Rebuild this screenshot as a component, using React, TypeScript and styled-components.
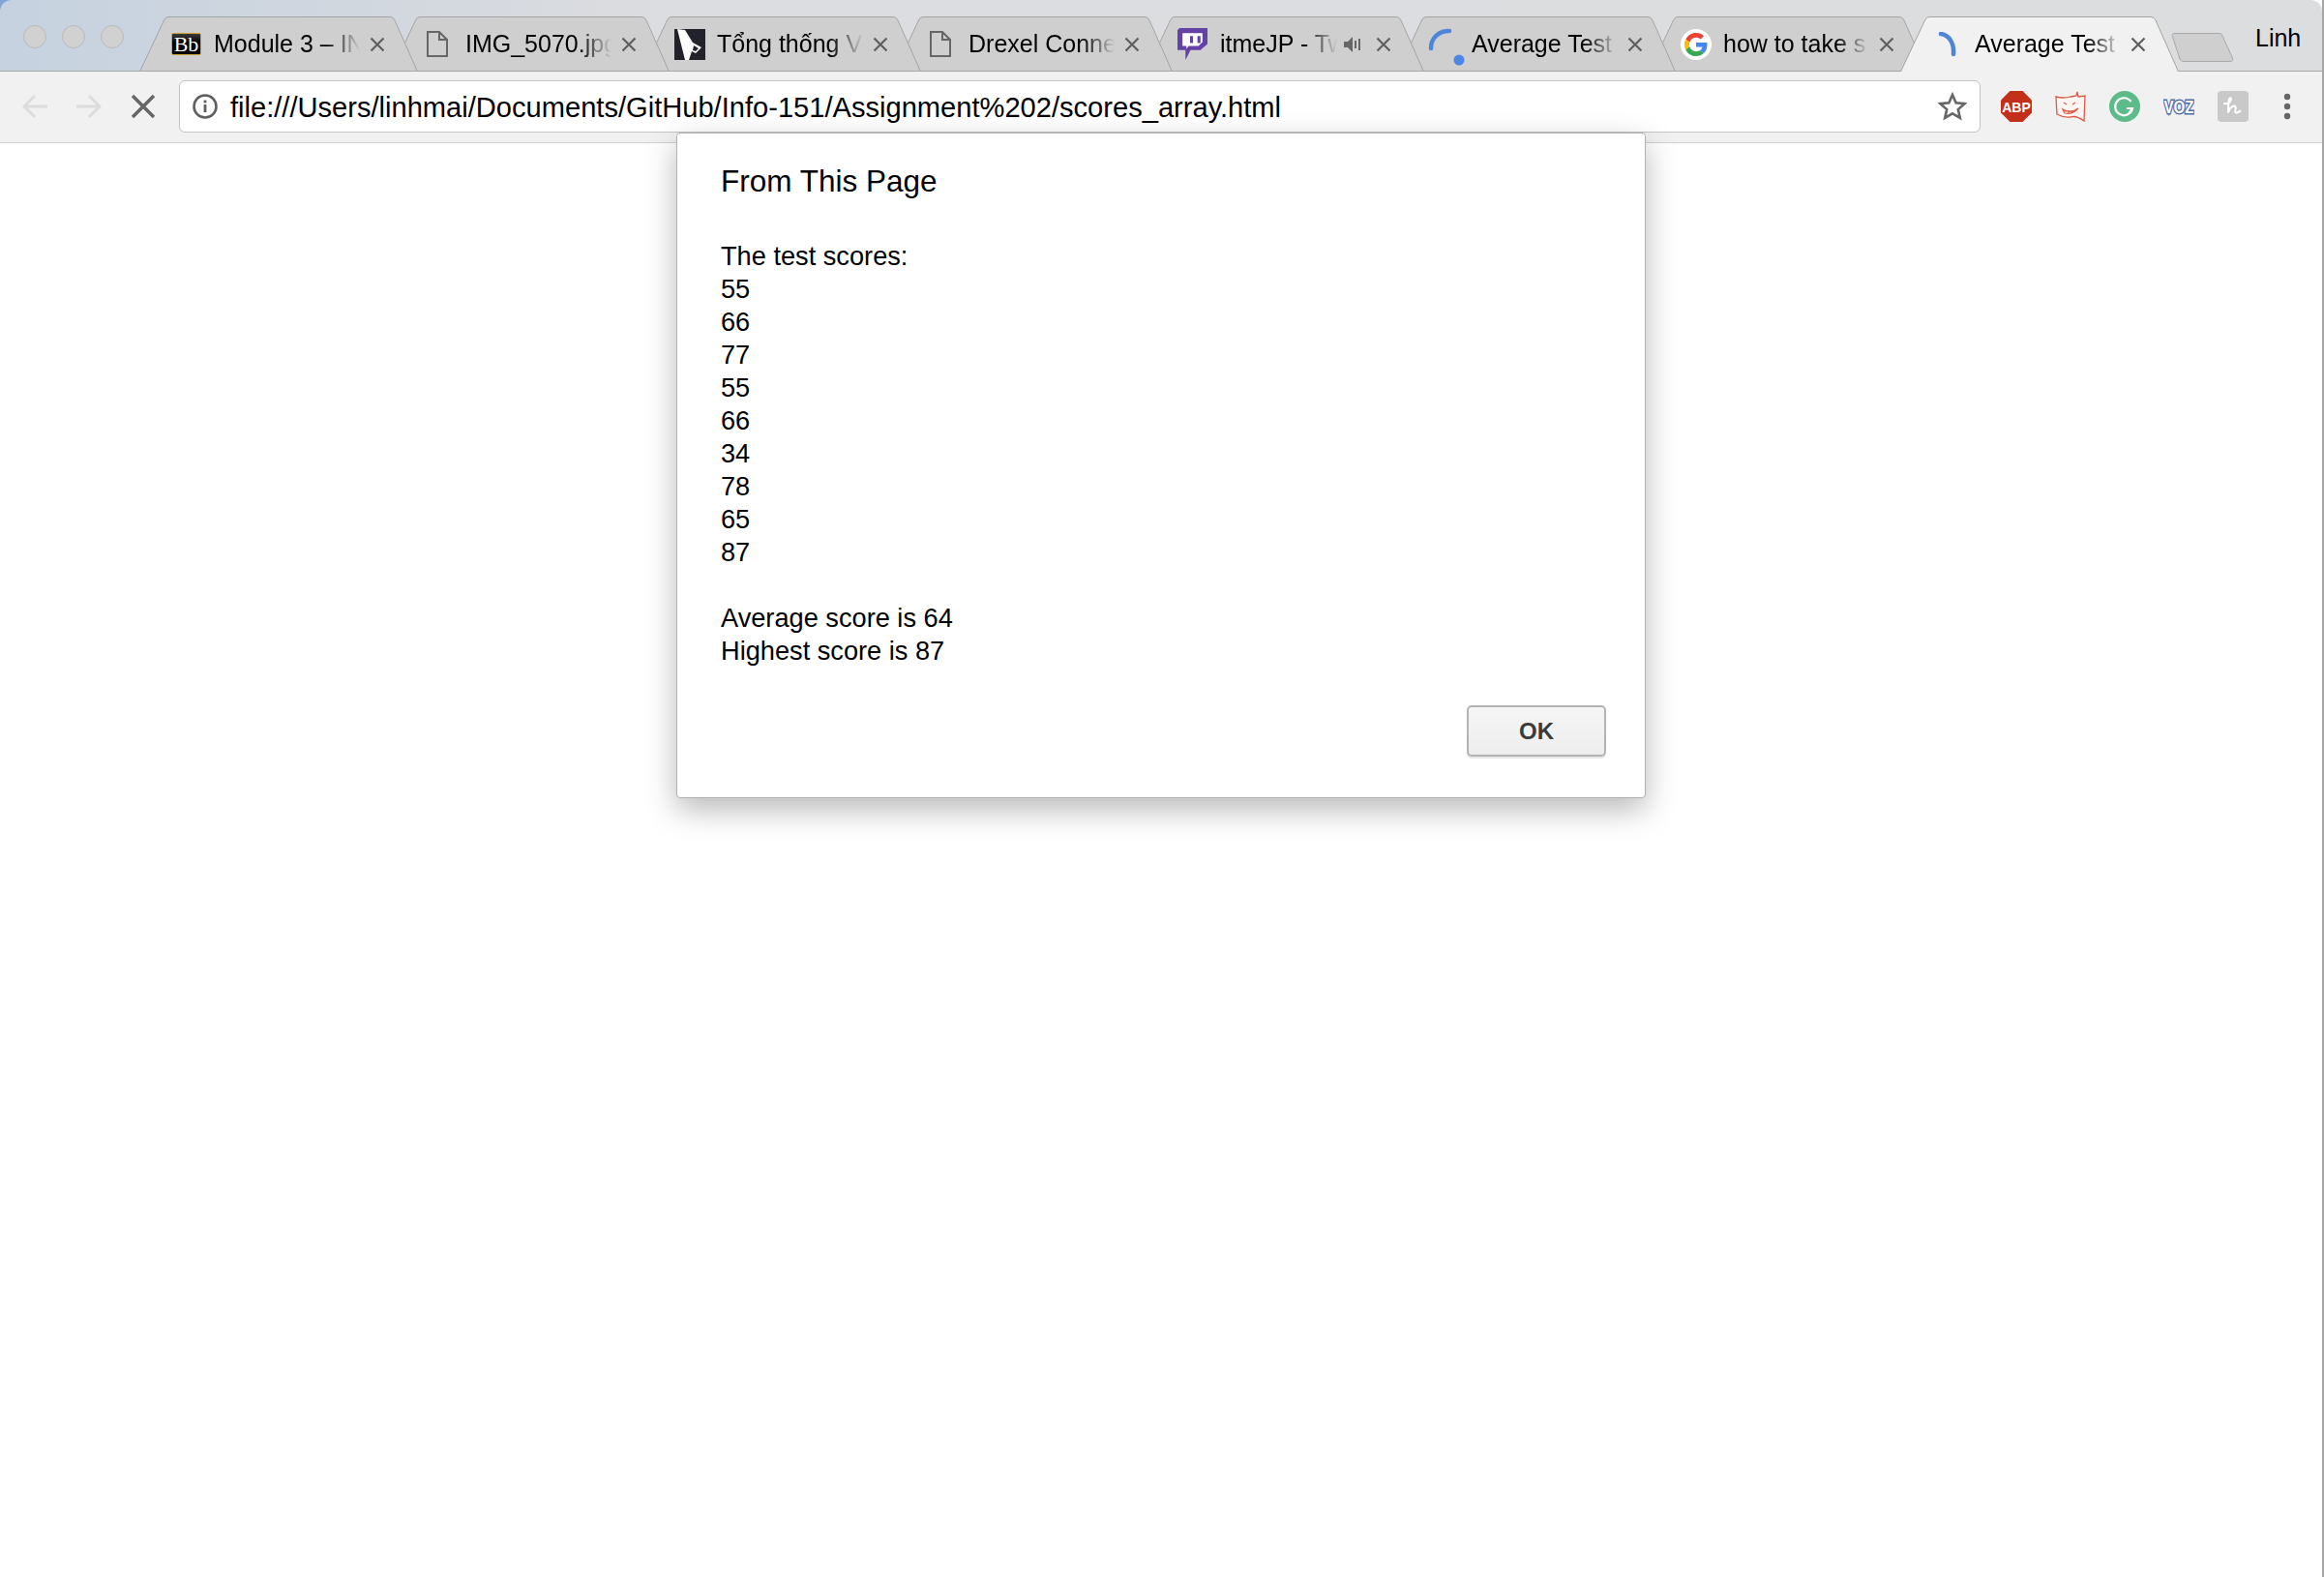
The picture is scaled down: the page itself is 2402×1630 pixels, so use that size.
import React from "react";
import styled, { createGlobalStyle } from "styled-components";

const GlobalStyle = createGlobalStyle`
  html, body {
    margin: 0;
    padding: 0;
    background: #ffffff;
  }
  body {
    font-family: "Liberation Sans", Arial, sans-serif;
  }
`;

const Page = styled.div`
  position: relative;
  box-sizing: border-box;
  width: 2402px;
  height: 1630px;
  overflow: hidden;
  border-right: 2px solid #a6a6a6;
  background: linear-gradient(90deg, #7fa6d4 0, #7fa6d4 20px, #ffffff 20px);
`;

const Content = styled.div`
  height: 100%;
  background: linear-gradient(180deg, transparent 0, transparent 20px, #ffffff 20px);
`;

const TabStrip = styled.div`
  position: relative;
  display: flex;
  align-items: flex-end;
  height: 74px;
  padding-left: 24px;
  border-radius: 12px 12px 0 0;
  background: linear-gradient(90deg, #c6d2e0 0, #cfd6df 300px, #dcdde0 700px, #dcdddf 100%);
  box-shadow: inset 0 -1px 0 #a6a6a6;
`;

const Lights = styled.div`
  display: flex;
  gap: 16px;
  align-self: flex-start;
  margin-top: 26px;
  margin-right: 16px;
`;

const Light = styled.span`
  width: 24px;
  height: 24px;
  box-sizing: border-box;
  border-radius: 50%;
  border: 1px solid #b9b9b9;
  background: #d1d1d1;
`;

const TabItem = styled.div<{ $active?: boolean; $order: number }>`
  position: relative;
  z-index: ${(p) => (p.$active ? 20 : 10 - p.$order)};
  display: flex;
  align-items: center;
  flex: none;
  box-sizing: border-box;
  width: 288px;
  height: 57px;
  padding: 0 32px 0 33px;
  margin-left: ${(p) => (p.$order === 0 ? 0 : -28)}px;
  color: #000000;
`;

const TabShape = styled.svg`
  position: absolute;
  left: 0;
  top: 0;
  width: 288px;
  height: 57px;
`;

const Favicon = styled.span<{ $inset?: number }>`
  position: relative;
  display: flex;
  align-items: center;
  flex: none;
  width: 44px;
  padding-left: ${(p) => p.$inset ?? 0}px;
  box-sizing: border-box;
`;

const BbLogo = styled.span`
  display: flex;
  align-items: center;
  justify-content: center;
  box-sizing: border-box;
  width: 31px;
  height: 23px;
  border: 1px solid #c8a030;
  border-radius: 2px;
  background: linear-gradient(180deg, #3a3a3a 0, #000000 45%);
  color: #ffffff;
  font-family: "Liberation Serif", "Times New Roman", serif;
  font-size: 22px;
  line-height: 1;
`;

const TabTitle = styled.span`
  position: relative;
  flex: 1;
  min-width: 0;
  overflow: hidden;
  white-space: nowrap;
  font-size: 25px;
  line-height: 34px;
  margin-top: -1px;
  -webkit-mask-image: linear-gradient(90deg, #000 calc(100% - 34px), transparent 100%);
  mask-image: linear-gradient(90deg, #000 calc(100% - 34px), transparent 100%);
`;

const Speaker = styled.svg`
  position: relative;
  flex: none;
  width: 18px;
  height: 18px;
  margin: 0 5px 0 7px;
`;

const CloseIcon = styled.svg`
  position: relative;
  flex: none;
  width: 20px;
  height: 20px;
  margin-left: 8px;
`;

const NewTab = styled.svg`
  position: relative;
  z-index: 1;
  flex: none;
  width: 65px;
  height: 30px;
  margin: 0 0 10px -8px;
`;

const ProfileName = styled.span`
  align-self: flex-start;
  margin: 22px 0 0 22px;
  font-size: 25px;
  line-height: 34px;
  color: #000000;
`;

const Toolbar = styled.div`
  display: flex;
  align-items: center;
  box-sizing: border-box;
  height: 74px;
  padding: 0 0 1px 23px;
  background: #f1f1f1;
  border-bottom: 1px solid #d0d0d0;
`;

const NavIcon = styled.svg<{ $gap: number; $w?: number }>`
  flex: none;
  width: ${(p) => p.$w ?? 26}px;
  height: 26px;
  margin-right: ${(p) => p.$gap}px;
`;

const Omnibox = styled.div`
  display: flex;
  align-items: center;
  flex: none;
  box-sizing: border-box;
  width: 1862px;
  height: 54px;
  padding: 0 13px 0 13px;
  border: 1px solid #c4c4c4;
  border-radius: 6px;
  background: #ffffff;
`;

const Url = styled.span`
  flex: 1;
  margin-left: 13px;
  padding-top: 2px;
  font-size: 29.1px;
  line-height: 36px;
  color: #000000;
  white-space: nowrap;
`;

const Extensions = styled.div`
  display: flex;
  align-items: center;
  gap: 24px;
  margin-left: 21px;
`;

const ExtIcon = styled.svg`
  flex: none;
  width: 32px;
  height: 32px;
`;

const VozLabel = styled.text`
  paint-order: stroke;
  font-family: "Liberation Sans", Arial, sans-serif;
  font-weight: 700;
`;

const SpinnerSvg = styled.svg`
  overflow: visible;
`;

const Dialog = styled.div`
  position: absolute;
  left: 699px;
  top: 137px;
  display: flex;
  flex-direction: column;
  box-sizing: border-box;
  width: 1002px;
  height: 688px;
  padding: 29px 40px 0 45px;
  background: #ffffff;
  border: 1px solid #b0b0b0;
  border-radius: 4px;
  box-shadow: 0 12px 32px rgba(0, 0, 0, 0.28);
`;

const DialogTitle = styled.div`
  font-size: 31.5px;
  line-height: 40px;
  color: #000000;
`;

const DialogBody = styled.div`
  margin-top: 41px;
  font-size: 27.2px;
  line-height: 34px;
  color: #000000;
`;

const BodyLine = styled.div`
  min-height: 34px;
`;

const DialogFooter = styled.div`
  display: flex;
  justify-content: flex-end;
  margin-top: 39px;
`;

const OkButton = styled.button`
  box-sizing: border-box;
  width: 144px;
  height: 53px;
  padding: 0;
  border: 2px solid #b3b3b3;
  border-radius: 5px;
  background: linear-gradient(180deg, #f6f6f6 0, #ededed 100%);
  box-shadow: 0 2px 0 #e6e6e6;
  color: #3b3b3b;
  font-family: "Liberation Sans", Arial, sans-serif;
  font-size: 24px;
  font-weight: 700;
`;

function FileGlyph() {
  return (
    <svg width="22" height="27" viewBox="0 0 22 27" fill="none" stroke="#666" strokeWidth="2">
      <path d="M1 1h12l8 8v17H1z" />
      <path d="M13 1v8h8" />
    </svg>
  );
}

function TwitchGlyph() {
  return (
    <svg width="31" height="33" viewBox="0 0 30 32">
      <path d="M0 2l2-2h28v16l-7 6H13l-5 10V22H0z" fill="#6441a4" />
      <path d="M5 5h20v9l-4 4H11l-2 3v-3H5z" fill="#ffffff" />
      <rect x="12.5" y="8" width="3" height="7" fill="#6441a4" />
      <rect x="20" y="8" width="3" height="7" fill="#6441a4" />
    </svg>
  );
}

function NewsGlyph() {
  return (
    <svg width="32" height="32" viewBox="0 0 32 32">
      <rect width="32" height="32" fill="#22222a" />
      <path d="M3 0l8 1 8 13 9 5-6 6-4-2-3 9-4 0z" fill="#ffffff" />
      <path d="M20 17l5 3-3 3-3-1z" fill="#22222a" />
    </svg>
  );
}

function GoogleGlyph() {
  return (
    <svg width="32" height="32" viewBox="-8 -8 64 64">
      <circle cx="24" cy="24" r="32" fill="#ffffff" />
      <path fill="#EA4335" d="M24 9.5c3.54 0 6.71 1.22 9.21 3.6l6.85-6.85C35.9 2.38 30.47 0 24 0 14.62 0 6.51 5.38 2.56 13.22l7.98 6.19C12.43 13.72 17.74 9.5 24 9.5z" />
      <path fill="#4285F4" d="M46.98 24.55c0-1.57-.15-3.09-.38-4.55H24v9.02h12.94c-.58 2.96-2.26 5.48-4.78 7.18l7.73 6c4.51-4.18 7.09-10.36 7.09-17.65z" />
      <path fill="#FBBC05" d="M10.53 28.59c-.48-1.45-.76-2.99-.76-4.59s.27-3.14.76-4.59l-7.98-6.19C.92 16.46 0 20.12 0 24c0 3.88.92 7.54 2.56 10.78l7.97-6.19z" />
      <path fill="#34A853" d="M24 48c6.48 0 11.93-2.13 15.89-5.81l-7.73-6c-2.15 1.45-4.92 2.3-8.16 2.3-6.26 0-11.57-4.22-13.47-9.91l-7.98 6.19C6.51 42.62 14.62 48 24 48z" />
    </svg>
  );
}

function WaitingSpinner() {
  return (
    <SpinnerSvg width="40" height="40" viewBox="0 0 40 40" fill="none">
      <path d="M2 24C2 13 10 6 21 6" stroke="#4d86d8" strokeWidth="4.5" strokeLinecap="round" />
      <circle cx="31" cy="36" r="5.5" fill="#4d86e8" />
    </SpinnerSvg>
  );
}

function LoadingSpinner() {
  return (
    <svg width="24" height="26" viewBox="0 0 24 26" fill="none">
      <path d="M4 2c8 1 14 9 13 21" stroke="#4d86d8" strokeWidth="4.5" strokeLinecap="round" />
    </svg>
  );
}

type Tab = {
  title: string;
  icon: React.ReactNode;
  inset?: number;
  muted?: boolean;
  active?: boolean;
};

const tabs: Tab[] = [
  { title: "Module 3 – IN", icon: <BbLogo>Bb</BbLogo> },
  { title: "IMG_5070.jpg", icon: <FileGlyph />, inset: 4 },
  { title: "Tổng thống V", icon: <NewsGlyph /> },
  { title: "Drexel Conne", icon: <FileGlyph />, inset: 4 },
  { title: "itmeJP - Tw", icon: <TwitchGlyph />, muted: true },
  { title: "Average Test", icon: <WaitingSpinner /> },
  { title: "how to take s", icon: <GoogleGlyph /> },
  { title: "Average Test", icon: <LoadingSpinner />, inset: 5, active: true },
];

const scoreLines = [
  "The test scores:",
  "55",
  "66",
  "77",
  "55",
  "66",
  "34",
  "78",
  "65",
  "87",
  "",
  "Average score is 64",
  "Highest score is 87",
];

const tabOutline = "M0.5 57L25.5 4Q27 0.5 30 0.5H259Q262.5 0.5 264 4L287.5 57";

function App() {
  return (
    <Page>
      <GlobalStyle />
      <Content>
        <TabStrip>
          <Lights>
            <Light />
            <Light />
            <Light />
          </Lights>
          {tabs.map((tab, i) => (
            <TabItem key={i} $order={i} $active={tab.active}>
              <TabShape viewBox="0 0 288 57">
                <path d={tabOutline} fill={tab.active ? "#f1f1f1" : "#cfcfcf"} />
                <path d={tabOutline} fill="none" stroke="#a3a3a3" />
                {!tab.active && <path d="M0 56.5H288" stroke="#a6a6a6" />}
              </TabShape>
              <Favicon $inset={tab.inset}>{tab.icon}</Favicon>
              <TabTitle>{tab.title}</TabTitle>
              {tab.muted && (
                <Speaker viewBox="0 0 18 18">
                  <path d="M0 6h4l5-5v16l-5-5H0z" fill="#666" />
                  <path d="M12 5v8M16 3v12" stroke="#666" strokeWidth="2" />
                </Speaker>
              )}
              <CloseIcon viewBox="0 0 20 20">
                <path d="M3.5 3.5l13 13M16.5 3.5l-13 13" stroke="#5f5f5f" strokeWidth="2.2" />
              </CloseIcon>
            </TabItem>
          ))}
          <NewTab viewBox="0 0 65 30">
            <path d="M1 2.5Q1 .5 3 .5H50Q52 .5 53 3L63.5 26Q64.5 29.5 61 29.5H13Q10 29.5 9 27z" fill="#cfcfcf" stroke="#a9a9a9" />
          </NewTab>
          <ProfileName>Linh</ProfileName>
        </TabStrip>
        <Toolbar>
          <NavIcon $gap={30} viewBox="0 0 26 26" fill="none" stroke="#dcdcdc" strokeWidth="3">
            <path d="M26 13H3M13 2L2 13l11 11" />
          </NavIcon>
          <NavIcon $gap={31} viewBox="0 0 26 26" fill="none" stroke="#dcdcdc" strokeWidth="3">
            <path d="M0 13h23M13 2l11 11-11 11" />
          </NavIcon>
          <NavIcon $gap={25} $w={24} viewBox="0 0 24 26" fill="none" stroke="#666666" strokeWidth="3.4">
            <path d="M1 2l22 22M23 2L1 24" />
          </NavIcon>
          <Omnibox>
            <svg width="26" height="26" viewBox="0 0 26 26" fill="none">
              <circle cx="13" cy="13" r="11.5" stroke="#5f5f5f" strokeWidth="2.6" />
              <rect x="11.6" y="11" width="2.8" height="8" fill="#5f5f5f" />
              <rect x="11.6" y="6.6" width="2.8" height="2.8" fill="#5f5f5f" />
            </svg>
            <Url>file:///Users/linhmai/Documents/GitHub/Info-151/Assignment%202/scores_array.html</Url>
            <svg width="30" height="30" viewBox="0 0 30 30" fill="none">
              <path d="M15 3l3.6 8.3 9 .8-6.8 6 2 8.8L15 22.3l-7.8 4.6 2-8.8-6.8-6 9-.8z" stroke="#666666" strokeWidth="2.6" strokeLinejoin="miter" />
            </svg>
          </Omnibox>
          <Extensions>
            <ExtIcon viewBox="0 0 32 32">
              <path d="M9.5 0h13L32 9.5v13L22.5 32h-13L0 22.5v-13z" fill="#c33019" />
              <text x="16" y="21.5" textAnchor="middle" fontFamily="Liberation Sans" fontWeight="700" fontSize="14" fill="#ffffff">ABP</text>
            </ExtIcon>
            <ExtIcon viewBox="0 0 32 32" fill="none" stroke="#dc5a45" strokeWidth="1.3">
              <path d="M1 6q8 2 15 0l6-1 1-4 1 5 7-1-1 26q-8-6-14-4-7 1-14-3z" fill="#fff6f3" />
              <path d="M9 12l3 2M21 12l-3 2M8 19q8 5 16-1-7 7-14 5z" />
              <path d="M11 20v2M14 20v3M17 20v3M20 20v2" strokeWidth="1" />
            </ExtIcon>
            <ExtIcon viewBox="0 0 32 32" fill="none">
              <circle cx="16" cy="16" r="16" fill="#5dbb8a" />
              <path d="M22.5 11A9 9 0 1 0 24 18h-6" stroke="#ffffff" strokeWidth="2.2" />
              <path d="M24 18.5l-3.5 4" stroke="#ffffff" strokeWidth="2.2" />
            </ExtIcon>
            <ExtIcon viewBox="0 0 32 32">
              <VozLabel x="0.5" y="23" textLength="31" lengthAdjust="spacingAndGlyphs" fontSize="19" fill="#ffffff" stroke="#4f6ea5" strokeWidth="3">VOZ</VozLabel>
            </ExtIcon>
            <ExtIcon viewBox="0 0 32 32">
              <rect width="32" height="32" rx="4" fill="#c9c9c9" />
              <path d="M7 13c3 1 6-1 7-4 .5-2-1.5-2.5-2-.5-1 4-1 10-1 14 1-4 4-7 6-7s2 2 1.5 4-.5 3 1 3 3-1 4-2" fill="none" stroke="#ffffff" strokeWidth="2" strokeLinecap="round" />
            </ExtIcon>
            <ExtIcon viewBox="0 0 32 32" fill="#666666">
              <circle cx="16" cy="6" r="3.2" />
              <circle cx="16" cy="16" r="3.2" />
              <circle cx="16" cy="26" r="3.2" />
            </ExtIcon>
          </Extensions>
        </Toolbar>
      </Content>
      <Dialog>
        <DialogTitle>From This Page</DialogTitle>
        <DialogBody>
          {scoreLines.map((line, i) => (
            <BodyLine key={i}>{line}</BodyLine>
          ))}
        </DialogBody>
        <DialogFooter>
          <OkButton>OK</OkButton>
        </DialogFooter>
      </Dialog>
    </Page>
  );
}

export default App;
